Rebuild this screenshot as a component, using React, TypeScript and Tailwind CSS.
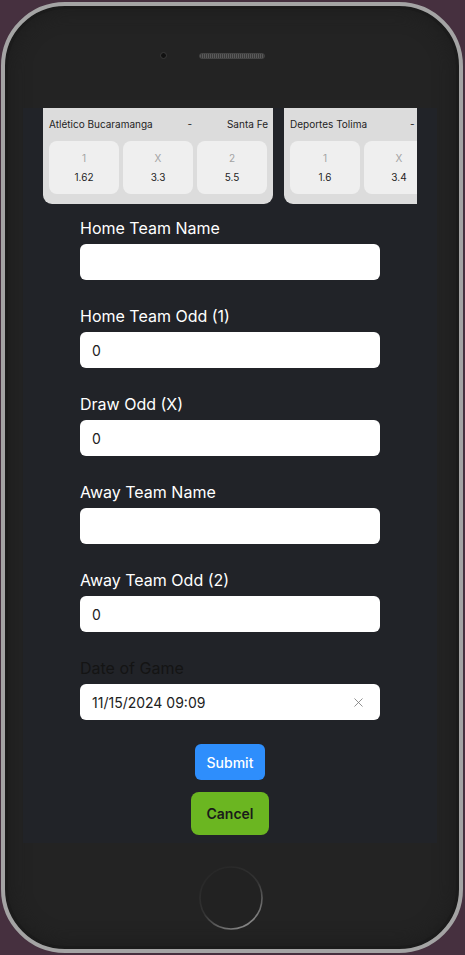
import { X } from "lucide-react"

const matches = [
  {
    home: "Atlético Bucaramanga",
    away: "Santa Fe",
    odds: [
      { label: "1", value: "1.62" },
      { label: "X", value: "3.3" },
      { label: "2", value: "5.5" },
    ],
  },
  {
    home: "Deportes Tolima",
    away: "Millonarios",
    odds: [
      { label: "1", value: "1.6" },
      { label: "X", value: "3.4" },
      { label: "2", value: "5.2" },
    ],
  },
]

const fields = [
  { label: "Home Team Name", value: "" },
  { label: "Home Team Odd (1)", value: "0" },
  { label: "Draw Odd (X)", value: "0" },
  { label: "Away Team Name", value: "" },
  { label: "Away Team Odd (2)", value: "0" },
]

function MatchCard({ match }: { match: (typeof matches)[number] }) {
  return (
    <div className="w-[230px] shrink-0 -mt-[10px] rounded-[9px] bg-[#dcdcdc] pt-[19px] pb-[10px]">
      <div className="flex justify-between px-[6px] pr-[5px] text-[10px] leading-[14px] text-[#1e1e1e] whitespace-nowrap">
        <span>{match.home}</span>
        <span>-</span>
        <span>{match.away}</span>
      </div>
      <div className="mt-[10px] grid grid-cols-3 gap-[4px] px-[6px]">
        {match.odds.map((odd) => (
          <div
            key={odd.label}
            className="flex h-[53px] flex-col items-center justify-center rounded-[8px] bg-[#efefef] text-[10px] leading-[14px]"
          >
            <span className="text-[#a3a3a3]">{odd.label}</span>
            <span className="mt-[5px] text-[#1e1e1e]">{odd.value}</span>
          </div>
        ))}
      </div>
    </div>
  )
}

function Field({ label, value }: { label: string; value: string }) {
  return (
    <div className="mb-[24px]">
      <div className="text-[16px] leading-[24px] text-white">{label}</div>
      <input
        readOnly
        value={value}
        className="mt-[4px] block h-[36px] w-full rounded-[6px] bg-white px-[12px] text-[14px] text-[#212121] outline-none"
      />
    </div>
  )
}

export default function App() {
  return (
    <div
      className="relative h-[955px] w-[465px] overflow-hidden bg-[#46303f] pt-[2px] pl-[1px]"
      style={{ fontFamily: "Inter, 'Liberation Sans', sans-serif" }}
    >
      <div className="relative h-[951px] w-[462px] rounded-[64px] border-[4px] border-[#a4a4a4] bg-[#232323] shadow-[inset_0_0_0_3px_#1b1b1b,inset_0_0_18px_6px_#1e1e1e]">
        {/* top bezel */}
        <div className="flex h-[102px] items-start pt-[46px] pl-[155px]">
          <div className="h-[7px] w-[7px] rounded-full border border-[#3a3a3a] bg-[#111]" />
          <div className="ml-[32px] mt-[1px] h-[6px] w-[66px] rounded-full border border-[#444] bg-[repeating-linear-gradient(90deg,#5a5a5a_0px,#5a5a5a_1px,#3a3a3a_1px,#3a3a3a_2px)]" />
        </div>

        {/* screen */}
        <div className="ml-[18px] h-[735px] w-[414px] overflow-hidden bg-[#212328]">
          <div className="mx-[20px] overflow-hidden">
            <div className="flex gap-[11px]">
              {matches.map((m) => (
                <MatchCard key={m.home} match={m} />
              ))}
            </div>
          </div>

          <div className="mx-[57px] mt-[12px]">
            {fields.map((f) => (
              <Field key={f.label} label={f.label} value={f.value} />
            ))}

            <div>
              <div className="text-[16px] leading-[24px] text-[#141414]">Date of Game</div>
              <div className="mt-[4px] flex h-[36px] items-center justify-between rounded-[6px] bg-white px-[12px] text-[14px] text-[#212121]">
                <span>11/15/2024 09:09</span>
                <X className="mr-[2px] h-[15px] w-[15px] text-[#777]" strokeWidth={1.3} />
              </div>
            </div>

            <div className="mt-[24px] flex flex-col items-center gap-[12px]">
              <button className="h-[36px] w-[70px] rounded-[6px] bg-[#2e8efc] text-[14px] font-medium text-white">
                Submit
              </button>
              <button className="h-[43px] w-[78px] rounded-[8px] bg-[#6bb621] text-[14px] font-semibold text-[#1a1a1a]">
                Cancel
              </button>
            </div>
          </div>
        </div>

        {/* home button */}
        <div className="flex justify-center pt-[22px] pr-[2px]">
          <svg width="66" height="66" viewBox="0 0 66 66">
            <defs>
              <linearGradient id="hb" x1="0.2" y1="0" x2="0.8" y2="1">
                <stop offset="0" stopColor="#262626" />
                <stop offset="0.5" stopColor="#333" />
                <stop offset="1" stopColor="#909090" />
              </linearGradient>
            </defs>
            <circle cx="33" cy="33" r="31" fill="#222" stroke="url(#hb)" strokeWidth="1.6" />
          </svg>
        </div>
      </div>
    </div>
  )
}
